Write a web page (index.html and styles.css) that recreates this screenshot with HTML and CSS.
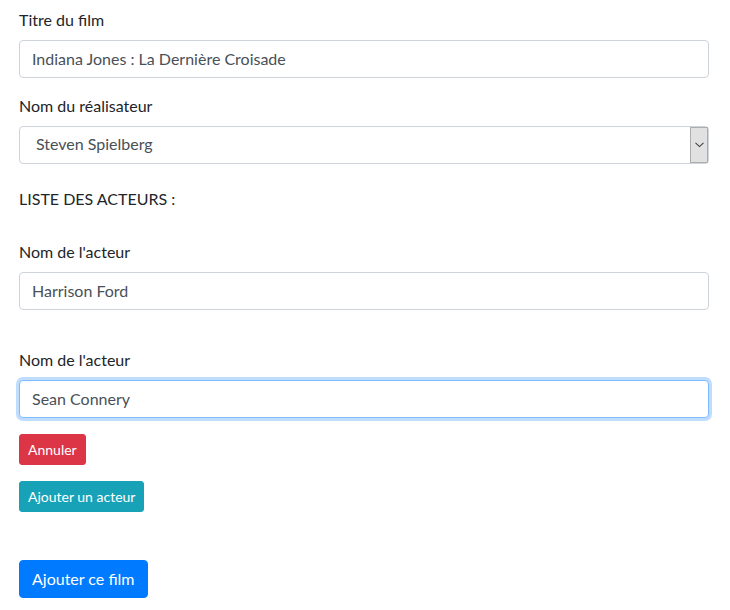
FILE: index.html
```html
<!DOCTYPE html>
<html lang="fr">
<head>
<meta charset="utf-8">
<link rel="stylesheet" href="styles.css">
</head>
<body>
<form class="film-form">
  <div class="form-group">
    <label class="form-label">Titre du film</label>
    <input class="form-control" type="text" value="Indiana Jones : La Dernière Croisade">
  </div>
  <div class="form-group">
    <label class="form-label">Nom du réalisateur</label>
    <div class="select-box">
      <span class="select-text">Steven Spielberg</span>
      <span class="select-arrow">
        <svg width="9" height="6" viewBox="0 0 9 6"><path d="M0.5 0.8 L4.5 4.6 L8.5 0.8" fill="none" stroke="#404040" stroke-width="1.1"/></svg>
      </span>
    </div>
  </div>
  <p class="section-title">LISTE DES ACTEURS :</p>
  <div class="actor">
    <label class="form-label">Nom de l'acteur</label>
    <input class="form-control" type="text" value="Harrison Ford">
  </div>
  <div class="actor">
    <label class="form-label">Nom de l'acteur</label>
    <input class="form-control focused" type="text" value="Sean Connery">
  </div>
  <div class="btn-row"><button type="button" class="btn btn-sm btn-danger">Annuler</button></div>
  <div class="btn-row"><button type="button" class="btn btn-sm btn-info">Ajouter un acteur</button></div>
  <div class="submit-row"><button type="button" class="btn btn-primary">Ajouter ce film</button></div>
</form>
</body>
</html>
```
FILE: styles.css
```css
* { box-sizing: border-box; }
html, body { margin: 0; padding: 0; background: #fff; }
body {
  font-family: "Lato", "Noto Sans", "Liberation Sans", sans-serif;
  font-size: 16px;
  line-height: 24px;
  color: #212529;
}
.film-form {
  width: 690px;
  margin-left: 19px;
  padding-top: 8px;
}
.form-group { margin-bottom: 16px; }
.form-label {
  display: block;
  margin-bottom: 8px;
  line-height: 24px;
}
.form-control {
  display: block;
  width: 100%;
  height: 38px;
  padding: 5px 12px 7px 12px;
  font-family: inherit;
  font-size: 16px;
  line-height: 24px;
  color: #495057;
  background: #fff;
  border: 1px solid #ced4da;
  border-radius: 4px;
  outline: none;
}
.form-control.focused {
  border-color: #80bdff;
  box-shadow: 0 0 0 3px rgba(0, 123, 255, 0.25);
}
.select-box {
  display: flex;
  align-items: stretch;
  height: 38px;
  border: 1px solid #ced4da;
  border-radius: 4px;
  background: #fff;
  color: #495057;
}
.select-text {
  flex: 1;
  padding: 5px 16px 7px 16px;
  line-height: 24px;
}
.select-arrow {
  width: 18px;
  background: #e1e1e1;
  border: 1px solid #adadad;
  display: flex;
  align-items: center;
  justify-content: center;
}
.section-title {
  margin: 23px 0 29px 0;
  line-height: 24px;
}
.actor { margin-bottom: 38px; }
.actor + .actor { margin-bottom: 16px; }
.btn {
  display: inline-block;
  font-family: inherit;
  color: #fff;
  border: 1px solid transparent;
  cursor: pointer;
}
.btn-sm {
  height: 31px;
  padding: 4px 8px;
  font-size: 14px;
  line-height: 21px;
  border-radius: 3px;
}
.btn-danger { background: #dc3545; border-color: #dc3545; }
.btn-info { background: #17a2b8; border-color: #17a2b8; }
.btn-primary {
  height: 38px;
  padding: 6px 12px;
  font-size: 16px;
  line-height: 24px;
  border-radius: 4px;
  background: #007bff;
  border-color: #007bff;
}
.btn-row { margin-bottom: 16px; line-height: 0; }
.btn-row + .btn-row { margin-bottom: 48px; }
.submit-row { line-height: 0; }
```
